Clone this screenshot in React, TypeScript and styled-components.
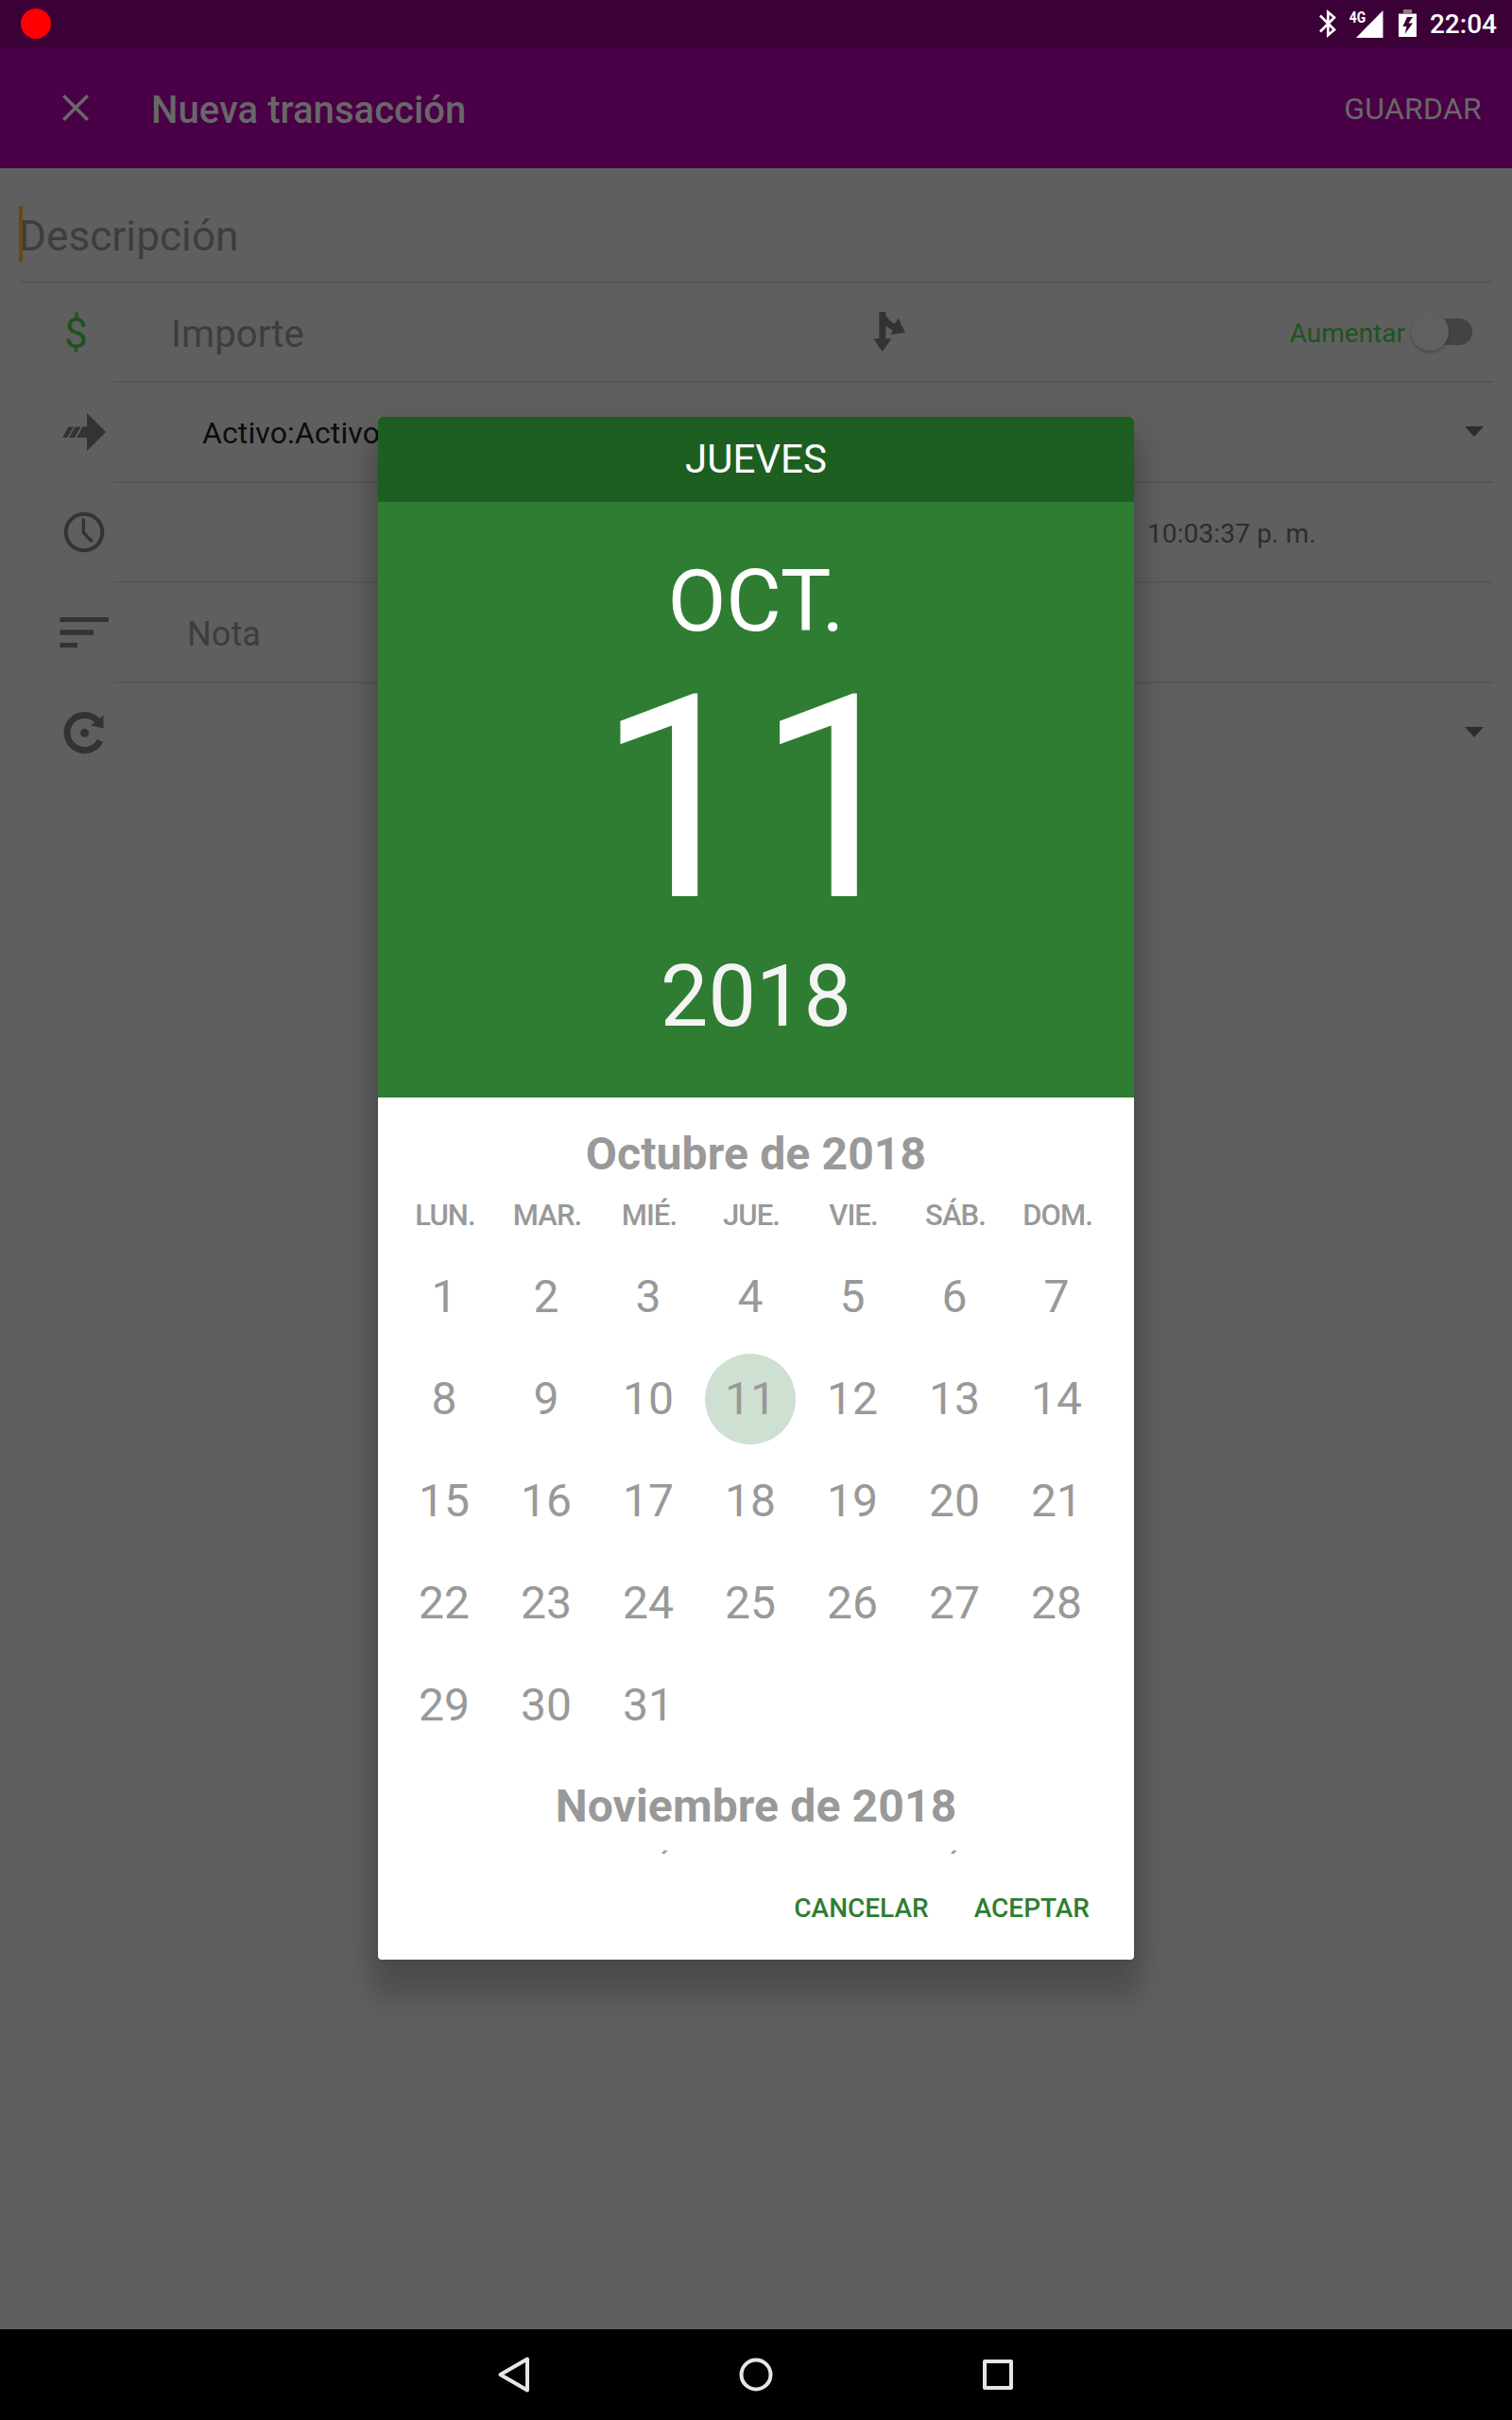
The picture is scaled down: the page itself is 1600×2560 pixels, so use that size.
import React from "react";
import styled, { createGlobalStyle } from "styled-components";

const GlobalStyle = createGlobalStyle`
  html, body { margin: 0; padding: 0; background: #000; }
  *, *::before, *::after { box-sizing: border-box; }
  body { font-family: Roboto, "Noto Sans", sans-serif; }
`;

const Screen = styled.div`
  position: relative;
  width: 1600px;
  height: 2560px;
  display: flex;
  flex-direction: column;
  background: #5f5f5f;
  overflow: hidden;
`;

const StatusBar = styled.header`
  height: 50px;
  flex: none;
  display: flex;
  align-items: center;
  justify-content: space-between;
  padding: 0 16px 0 22px;
  background: #3b0036;
`;

const RecordDot = styled.span`
  width: 32px;
  height: 32px;
  border-radius: 50%;
  background: #ff0000;
`;

const StatusIcons = styled.div`
  display: flex;
  align-items: center;
  height: 50px;
`;

const StatusGlyph = styled.svg<{ $gap: number }>`
  display: block;
  height: 50px;
  margin-right: ${(p) => p.$gap}px;
`;

const Clock = styled.span`
  font-size: 28px;
  font-weight: 500;
  line-height: 52px;
  padding-top: 2px;
  color: #fff;
`;

const AppBar = styled.div`
  height: 128px;
  flex: none;
  display: flex;
  align-items: center;
  padding: 0 32px 0 64px;
  background: #4a0046;
  color: #686868;
`;

const CloseIcon = styled.svg`
  display: block;
  width: 32px;
  height: 32px;
`;

const Title = styled.h1`
  margin: 6px 0 0 64px;
  flex: 1;
  font-size: 40px;
  font-weight: 500;
  line-height: 48px;
  letter-spacing: 0.05px;
`;

const SaveButton = styled.button`
  padding: 2px 0 0;
  border: 0;
  background: none;
  font: 400 32px/40px Roboto, sans-serif;
  letter-spacing: 0.25px;
  color: inherit;
`;

const Form = styled.main`
  flex: 1;
  display: flex;
  flex-direction: column;
`;

const Description = styled.div`
  position: relative;
  height: 121px;
  margin: 0 20px;
  padding-top: 42px;
  border-bottom: 2px solid #565656;
  font-size: 44px;
  line-height: 60px;
  letter-spacing: 0.1px;
  color: #3d3d3d;
`;

const Caret = styled.i`
  position: absolute;
  left: 0;
  top: 40px;
  width: 4px;
  height: 59px;
  background: rgba(108, 70, 0, 0.85);
`;

const Row = styled.div`
  display: flex;
  height: 106px;
  padding-right: 20px;
`;

const IconCell = styled.div`
  width: 120px;
  height: 104px;
  padding-left: 61px;
  display: flex;
  align-items: center;
`;

const RowIcon = styled.svg`
  display: block;
  width: 56px;
  height: 56px;
  color: #333;
`;

const Currency = styled.span`
  margin-left: 7px;
  padding-top: 3px;
  font-size: 44px;
  line-height: 56px;
  color: #1c5420;
`;

const RowBody = styled.div<{ $last?: boolean }>`
  flex: 1;
  display: flex;
  align-items: center;
  border-bottom: 2px solid ${(p) => (p.$last ? "transparent" : "#565656")};
`;

const Field = styled.span<{ $size: number; $indent: number; $color: string; $width?: number; $drop?: number }>`
  padding-left: ${(p) => p.$indent}px;
  width: ${(p) => (p.$width ? p.$width + "px" : "auto")};
  font-size: ${(p) => p.$size}px;
  line-height: 56px;
  letter-spacing: 0.12px;
  padding-top: ${(p) => p.$drop ?? 3}px;
  color: ${(p) => p.$color};
  white-space: nowrap;
`;

const SplitIcon = styled.svg`
  display: block;
  width: 40px;
  height: 48px;
`;

const SwitchGroup = styled.label`
  display: flex;
  align-items: center;
  margin-left: auto;
  padding-right: 22px;
`;

const SwitchLabel = styled.span`
  margin-right: 13px;
  padding-top: 3px;
  font-size: 28px;
  line-height: 40px;
  color: #1c5420;
`;

const Track = styled.span`
  width: 58px;
  height: 28px;
  border-radius: 14px;
  background: #434343;
`;

const Thumb = styled.span`
  display: block;
  width: 40px;
  height: 40px;
  margin: -6px 0 0 -7px;
  border-radius: 50%;
  background: #606060;
  box-shadow: 0 2px 3px rgba(0, 0, 0, 0.22);
`;

const Arrow = styled.i`
  margin: 0 10px 1px auto;
  border: 10px solid transparent;
  border-top: 11px solid #2d2d2d;
  border-bottom: 0;
`;

const NavBar = styled.nav`
  height: 96px;
  flex: none;
  display: flex;
  justify-content: center;
  align-items: center;
  gap: 208px;
  background: #000;
`;

const NavIcon = styled.svg`
  display: block;
  width: 48px;
  height: 48px;
  fill: none;
  stroke: #e6e6e6;
  stroke-width: 4;
  stroke-linejoin: round;
`;

const Overlay = styled.div`
  position: absolute;
  inset: 50px 0 96px;
  display: flex;
  justify-content: center;
  align-items: center;
`;

const Dialog = styled.section`
  width: 800px;
  height: 1632px;
  display: flex;
  flex-direction: column;
  border-radius: 4px;
  overflow: hidden;
  background: #fff;
  box-shadow: 0 34px 26px 8px rgba(0, 0, 0, 0.16), 0 8px 30px rgba(0, 0, 0, 0.12);
`;

const Weekday = styled.div`
  height: 90px;
  background: #1d5f20;
  color: #fff;
  font-size: 42px;
  line-height: 90px;
  text-align: center;
`;

const DateHeader = styled.div`
  height: 630px;
  padding-top: 53px;
  background: #2f7d32;
  text-align: center;
  color: #fff;
`;

const DatePart = styled.div<{ $size: number; $line: number; $muted?: boolean }>`
  font-size: ${(p) => p.$size}px;
  line-height: ${(p) => p.$line}px;
  color: ${(p) => (p.$muted ? "#f4f4f4" : "#fff")};
`;

const MonthList = styled.div`
  height: 800px;
  padding: 7px 16px 0;
  overflow: hidden;
  color: #999;
`;

const MonthTitle = styled.h2`
  margin: 26px 0 0;
  height: 54px;
  font-size: 48px;
  font-weight: 700;
  line-height: 54px;
  letter-spacing: 0.15px;
  text-align: center;
`;

const WeekRow = styled.div`
  display: grid;
  grid-template-columns: repeat(7, 108px);
  height: 70px;
  padding-left: 1px;
  font-size: 31px;
  font-weight: 500;
  line-height: 75px;
  letter-spacing: -0.9px;
  text-align: center;
`;

const DayGrid = styled.div`
  display: grid;
  grid-template-columns: repeat(7, 108px);
  grid-auto-rows: 108px;
  place-items: center;
`;

const Day = styled.span<{ $selected?: boolean }>`
  width: 96px;
  height: 96px;
  border-radius: 50%;
  font-size: 48px;
  line-height: 96px;
  text-align: center;
  background: ${(p) => (p.$selected ? "#cee0d1" : "transparent")};
`;

const Actions = styled.footer`
  flex: 1;
  display: flex;
  align-items: center;
  justify-content: flex-end;
  gap: 48px;
  padding: 4px 47px 0 0;
`;

const ActionButton = styled.button`
  padding: 0;
  border: 0;
  background: none;
  font: 500 28px/40px Roboto, sans-serif;
  color: #2f7d32;
`;

const WEEKDAYS = ["LUN.", "MAR.", "MIÉ.", "JUE.", "VIE.", "SÁB.", "DOM."];
const DAYS = Array.from({ length: 31 }, (_, i) => i + 1);

const WeekHeader = () => (
  <WeekRow>
    {WEEKDAYS.map((d) => (
      <span key={d}>{d}</span>
    ))}
  </WeekRow>
);

const StatusBarIcons = () => (
  <StatusIcons>
    <StatusGlyph width="20" viewBox="0 0 20 50" $gap={13} fill="none" stroke="#fff" strokeWidth="2.7">
      <path d="M2 16.5L17 31.5L10.3 37.2V12.8L17 18.5L2 33.5" strokeLinejoin="miter" />
    </StatusGlyph>
    <StatusGlyph width="37" viewBox="0 0 37 50" $gap={15} fill="#fff">
      <path d="M35.500 11V40H7Z" />
      <text x="-0.2" y="24" fontSize="17" fontWeight="700" textLength="17.500" lengthAdjust="spacingAndGlyphs">4G</text>
    </StatusGlyph>
    <StatusGlyph width="20" viewBox="0 0 20 50" $gap={13}>
      <path d="M5 10h9v4h5v2H0v-2h5z" fill="#957a93" />
      <path d="M0 15H19V39H0Z M9 18L4.500 28H8.500L6.500 36L15 24.500H10.500L15 18Z" fill="#fff" fillRule="evenodd" />
    </StatusGlyph>
    <Clock>22:04</Clock>
  </StatusIcons>
);

export default function App() {
  return (
    <Screen>
      <GlobalStyle />
      <StatusBar>
        <RecordDot />
        <StatusBarIcons />
      </StatusBar>
      <AppBar>
        <CloseIcon viewBox="0 0 32 32" stroke="currentColor" strokeWidth="3.6">
          <path d="M3.3 3.3L28.7 28.7M28.7 3.3L3.3 28.7" />
        </CloseIcon>
        <Title>Nueva transacción</Title>
        <SaveButton>GUARDAR</SaveButton>
      </AppBar>
      <Form>
        <Description>
          Descripción
          <Caret />
        </Description>
        <Row>
          <IconCell>
            <Currency>$</Currency>
          </IconCell>
          <RowBody>
            <Field $size={40} $indent={61} $width={801} $drop={6} $color="#3d3d3d">Importe</Field>
            <SplitIcon viewBox="0 0 40 48" fill="#333">
              <path d="M9.300 3H16.300V6C18 10 21 13 25.700 15.500L29.700 9.700L37 24.700L21 27L24 22.500C21 21 18 19.500 16.300 17.500V31.300H22.300L12.700 45L3.300 31.300H9.300Z" />
            </SplitIcon>
            <SwitchGroup>
              <SwitchLabel>Aumentar</SwitchLabel>
              <Track>
                <Thumb />
              </Track>
            </SwitchGroup>
          </RowBody>
        </Row>
        <Row>
          <IconCell>
            <RowIcon viewBox="0 0 56 56" fill="currentColor">
              <path d="M31 8L51 28L31 48V34H20L26.500 22.500H31Z M11.500 22.500H17L10 34H5Z M18.500 22.500H24.500L18 34H12Z" />
            </RowIcon>
          </IconCell>
          <RowBody>
            <Field $size={32} $indent={94} $drop={1} $color="#0c0c0c">Activo:Activo</Field>
            <Arrow />
          </RowBody>
        </Row>
        <Row>
          <IconCell>
            <RowIcon viewBox="0 0 56 56" fill="none" stroke="currentColor">
              <circle cx="28" cy="28" r="19.300" strokeWidth="4" />
              <path d="M27.300 13.500V28.500L36.500 38" strokeWidth="3.300" />
            </RowIcon>
          </IconCell>
          <RowBody>
            <Field $size={28} $indent={1094} $color="#2d2d2d">10:03:37 p. m.</Field>
          </RowBody>
        </Row>
        <Row>
          <IconCell>
            <RowIcon viewBox="0 0 56 56" fill="currentColor">
              <path d="M2.500 12H54V17H2.500Z M2.500 25.300H38V30.700H2.500Z M2.500 39H21V44H2.500Z" />
            </RowIcon>
          </IconCell>
          <RowBody>
            <Field $size={36} $indent={78} $color="#3d3d3d">Nota</Field>
          </RowBody>
        </Row>
        <Row>
          <IconCell>
            <RowIcon viewBox="0 0 56 56" fill="none" stroke="currentColor">
              <path d="M45 36.500A18.500 18.500 0 1 1 42.500 16" strokeWidth="7" />
              <path d="M35 20.500L48.500 9.500V23.500Z" fill="currentColor" stroke="none" />
              <circle cx="28.500" cy="28.300" r="4.500" fill="currentColor" stroke="none" />
            </RowIcon>
          </IconCell>
          <RowBody $last>
            <Arrow />
          </RowBody>
        </Row>
      </Form>
      <NavBar>
        <NavIcon viewBox="0 0 48 48">
          <path d="M38 7.500V40.500L9.500 24Z" />
        </NavIcon>
        <NavIcon viewBox="0 0 48 48">
          <circle cx="24" cy="24" r="15.500" />
        </NavIcon>
        <NavIcon viewBox="0 0 48 48">
          <rect x="10" y="10" width="28" height="28" />
        </NavIcon>
      </NavBar>
      <Overlay>
        <Dialog>
          <Weekday>JUEVES</Weekday>
          <DateHeader>
            <DatePart $size={90} $line={106}>OCT.</DatePart>
            <DatePart $size={300} $line={311}>11</DatePart>
            <DatePart $size={90} $line={108} $muted>2018</DatePart>
          </DateHeader>
          <MonthList>
            <MonthTitle>Octubre de 2018</MonthTitle>
            <WeekHeader />
            <DayGrid>
              {DAYS.map((d) => (
                <Day key={d} $selected={d === 11}>
                  {d}
                </Day>
              ))}
            </DayGrid>
            <MonthTitle>Noviembre de 2018</MonthTitle>
            <WeekHeader />
          </MonthList>
          <Actions>
            <ActionButton>CANCELAR</ActionButton>
            <ActionButton>ACEPTAR</ActionButton>
          </Actions>
        </Dialog>
      </Overlay>
    </Screen>
  );
}
